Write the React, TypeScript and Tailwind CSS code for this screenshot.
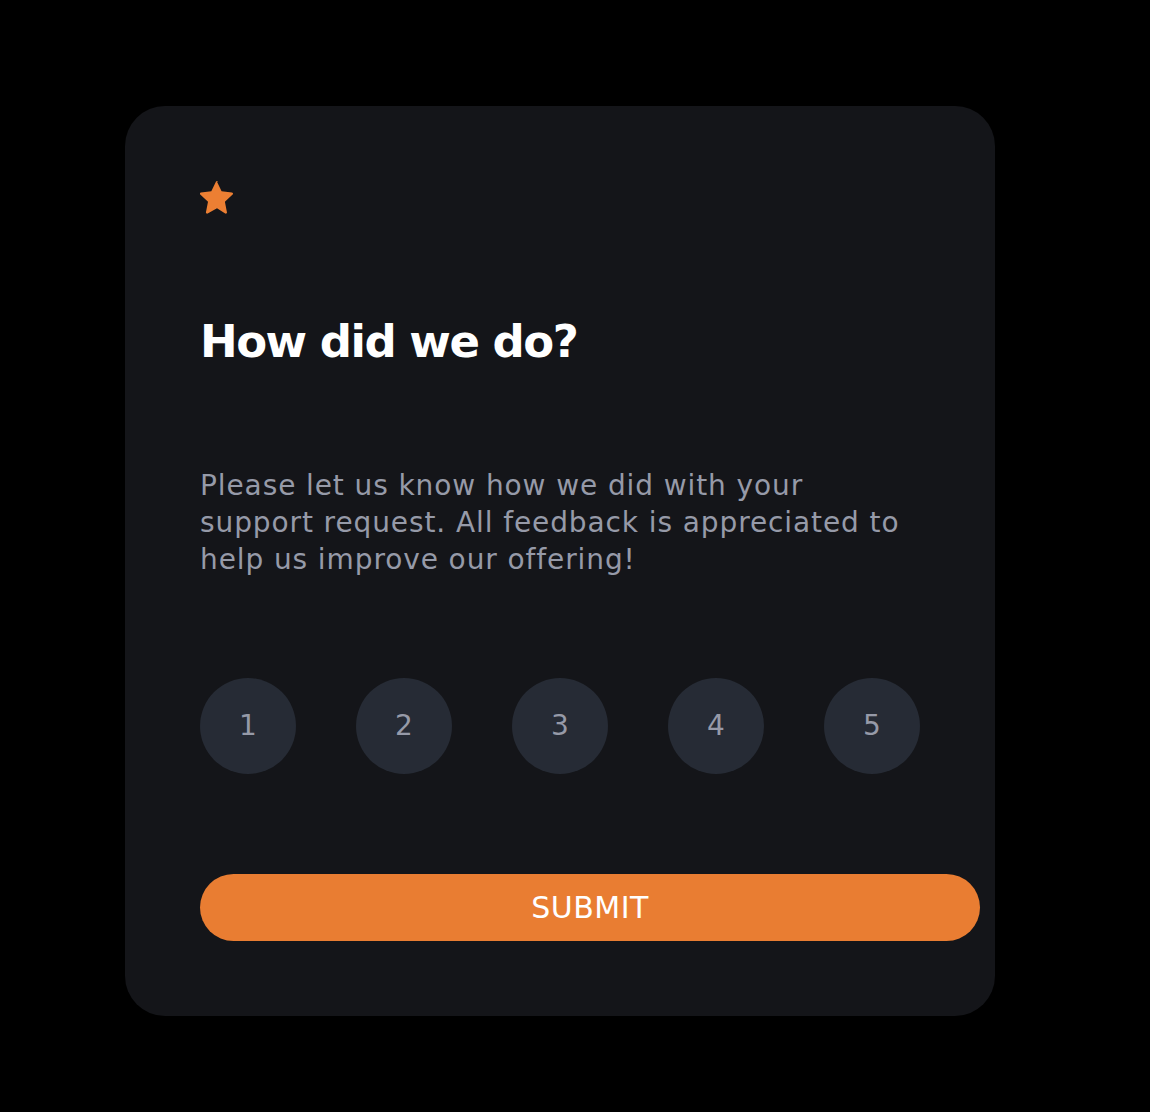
const ratings = [1, 2, 3, 4, 5]

function Star() {
  return (
    <svg width="34" height="33" viewBox="1.5 1.8 21 20.9" className="block">
      <path
        d="M12 2.2l2.9 6.1 6.6.8c.6.1.9.9.4 1.3l-4.9 4.6 1.3 6.6c.1.6-.5 1.1-1.1.8L12 19.1l-5.9 3.3c-.5.3-1.2-.2-1.1-.8l1.3-6.6-4.9-4.6c-.5-.4-.2-1.2.4-1.3l6.6-.8L11.3 2.2c.3-.5 1.1-.5 1.4 0z"
        fill="#ec7f33"
      />
    </svg>
  )
}

export default function App() {
  return (
    <div
      className="min-h-[1112px] w-[1150px] bg-black pt-[106px] pl-[125px]"
      style={{ fontFamily: '"DejaVu Sans", "Noto Sans", sans-serif' }}
    >
      <div className="w-[870px] h-[910px] rounded-[40px] bg-[#141519] pt-[75px] pl-[75px] flex flex-col">
        {/* Star */}
        <div className="h-[33px]">
          <Star />
        </div>

        {/* Heading */}
        <h1 className="mt-[102px] text-[45px] leading-[52px] font-bold text-white tracking-[-1.5px]">
          How did we do?
        </h1>

        {/* Text */}
        <p className="mt-[99px] w-[715px] text-[28px] leading-[37px] text-[#969aa8] tracking-[0.9px]">
          Please let us know how we did with your support request. All feedback is appreciated to help us improve our offering!
        </p>

        {/* Ratings */}
        <div className="mt-[100px] flex gap-[60px]">
          {ratings.map((n) => (
            <button
              key={n}
              className="w-24 h-24 rounded-full bg-[#262b35] flex items-center justify-center text-[28px] text-[#969aa8]"
            >
              {n}
            </button>
          ))}
        </div>

        {/* Submit */}
        <button className="mt-[100px] w-[780px] h-[67px] rounded-full bg-[#e97d32] text-white text-[30px] tracking-[0.5px]">
          SUBMIT
        </button>
      </div>
    </div>
  )
}
